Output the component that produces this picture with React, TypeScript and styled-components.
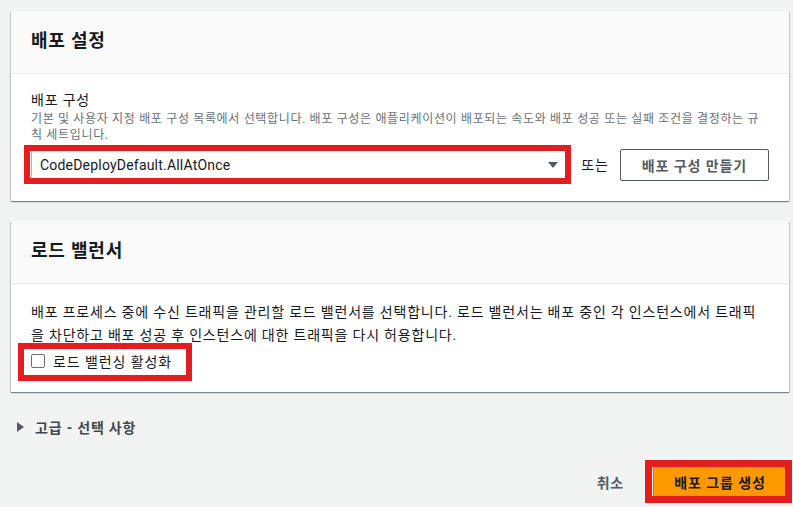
import React from "react";
import styled, { createGlobalStyle } from "styled-components";

const Global = createGlobalStyle`
  html, body {
    margin: 0;
    padding: 0;
    background: #f2f3f3;
    overflow: hidden;
  }
  body {
    font-family: Roboto, "Noto Sans CJK KR", sans-serif;
    color: #16191f;
    letter-spacing: 0.05em;
  }
  * { box-sizing: border-box; }
`;

const Page = styled.div`
  width: 793px;
  height: 507px;
  padding: 11px 4px 0 11px;
  background: #f2f3f3;
  display: flex;
  flex-direction: column;
`;

const Card = styled.section<{ $gap?: number }>`
  background: #ffffff;
  box-shadow: 0 1px 1px 0 rgba(0, 28, 36, 0.3),
    1px 1px 1px 0 rgba(0, 28, 36, 0.15),
    -1px 1px 1px 0 rgba(0, 28, 36, 0.15);
  margin-top: ${(p) => p.$gap ?? 0}px;
`;

const CardHeader = styled.div`
  background: #fafafa;
  border-bottom: 1px solid #eaeded;
  padding: 19px 20px 21px;
`;

const Title = styled.h2`
  margin: 0;
  font-size: 18px;
  line-height: 22px;
  font-weight: 700;
  color: #16191f;
`;

const CardBody = styled.div<{ $top: number }>`
  padding: ${(p) => p.$top}px 20px 20px;
`;

const Label = styled.div`
  font-size: 14px;
  line-height: 22px;
  color: #16191f;
`;

const Description = styled.div`
  font-size: 12px;
  line-height: 16px;
  letter-spacing: 0.055em;
  color: #687078;
`;

const ControlRow = styled.div`
  margin-top: 6px;
  display: flex;
  align-items: center;
`;

const Annotated = styled.div<{ $grow?: boolean }>`
  position: relative;
  display: ${(p) => (p.$grow ? "block" : "inline-flex")};
  flex: ${(p) => (p.$grow ? "1 1 auto" : "0 0 auto")};
  align-self: flex-start;
`;

const RedFrame = styled.span<{
  $t: number;
  $r: number;
  $b: number;
  $l: number;
  $w: number;
}>`
  position: absolute;
  top: ${(p) => p.$t}px;
  right: ${(p) => p.$r}px;
  bottom: ${(p) => p.$b}px;
  left: ${(p) => p.$l}px;
  border: ${(p) => p.$w}px solid #e41d1f;
  pointer-events: none;
`;

const Select = styled.div`
  height: 32px;
  border: 1px solid #aab7b8;
  border-radius: 2px;
  background: #ffffff;
  display: flex;
  align-items: center;
  justify-content: space-between;
  padding: 0 8px 0 8px;
  font-size: 14px;
  letter-spacing: 0.2px;
  color: #16191f;
`;

const Caret = styled.svg`
  width: 10px;
  height: 6px;
  flex: none;
`;

const OrText = styled.span`
  font-size: 14px;
  line-height: 22px;
  margin: 0 11px 0 14px;
  color: #16191f;
`;

const NormalButton = styled.button`
  height: 32px;
  padding: 0 21px;
  border: 1px solid #545b64;
  border-radius: 2px;
  background: #ffffff;
  color: #545b64;
  font-family: inherit;
  letter-spacing: 0.065em;
  font-size: 14px;
  font-weight: 700;
  white-space: nowrap;
`;

const Paragraph = styled.p`
  margin: 0;
  font-size: 14px;
  line-height: 23px;
  color: #16191f;
`;

const CheckRow = styled.label`
  margin-top: 3px;
  display: flex;
  align-items: center;
  gap: 8px;
  height: 22px;
  font-size: 14px;
  letter-spacing: 0.065em;
  color: #16191f;
`;

const CheckBox = styled.span`
  width: 14px;
  height: 14px;
  border: 1px solid #687078;
  border-radius: 2px;
  background: #ffffff;
  flex: none;
`;

const Expandable = styled.div`
  margin-top: 24px;
  padding-left: 6px;
  display: flex;
  align-items: center;
  gap: 11px;
  height: 22px;
  font-size: 14px;
  font-weight: 700;
  color: #414750;
`;

const Footer = styled.div`
  margin-top: 28px;
  padding-right: 2px;
  display: flex;
  justify-content: flex-end;
  align-items: center;
  gap: 29px;
`;

const LinkButton = styled.button`
  border: none;
  background: transparent;
  padding: 0;
  font-family: inherit;
  letter-spacing: inherit;
  font-size: 14px;
  font-weight: 700;
  color: #545b64;
`;

const PrimaryButton = styled.button`
  height: 32px;
  width: 134px;
  border: 1px solid #ec7211;
  border-radius: 2px;
  background: #ff9900;
  color: #16191f;
  font-family: inherit;
  letter-spacing: 0.065em;
  font-size: 14px;
  font-weight: 700;
  white-space: nowrap;
`;

export default function App() {
  return (
    <>
      <Global />
      <Page>
        <Card>
          <CardHeader>
            <Title>배포 설정</Title>
          </CardHeader>
          <CardBody $top={15}>
            <Label>배포 구성</Label>
            <Description>
              기본 및 사용자 지정 배포 구성 목록에서 선택합니다. 배포 구성은
              애플리케이션이 배포되는 속도와 배포 성공 또는 실패 조건을 결정하는
              규칙 세트입니다.
            </Description>
            <ControlRow>
              <Annotated $grow>
                <Select>
                  <span>CodeDeployDefault.AllAtOnce</span>
                  <Caret viewBox="0 0 10 6">
                    <path d="M0 0 L10 0 L5 6 Z" fill="#545b64" />
                  </Caret>
                </Select>
                <RedFrame $t={-4} $r={-4} $b={-3} $l={-7} $w={6} />
              </Annotated>
              <OrText>또는</OrText>
              <NormalButton>배포 구성 만들기</NormalButton>
            </ControlRow>
          </CardBody>
        </Card>

        <Card $gap={20}>
          <CardHeader>
            <Title>로드 밸런서</Title>
          </CardHeader>
          <CardBody $top={17}>
            <Paragraph>
              배포 프로세스 중에 수신 트래픽을 관리할 로드 밸런서를 선택합니다.
              로드 밸런서는 배포 중인 각 인스턴스에서 트래픽을 차단하고 배포 성공
              후 인스턴스에 대한 트래픽을 다시 허용합니다.
            </Paragraph>
            <Annotated>
              <CheckRow>
                <CheckBox />
                <span>로드 밸런싱 활성화</span>
              </CheckRow>
              <RedFrame $t={-4} $r={-20} $b={-9} $l={-13} $w={6} />
            </Annotated>
          </CardBody>
        </Card>

        <Expandable>
          <svg width="7" height="10" viewBox="0 0 7 10">
            <path d="M0 0 L7 5 L0 10 Z" fill="#545b64" />
          </svg>
          <span>고급 - 선택 사항</span>
        </Expandable>

        <Footer>
          <LinkButton>취소</LinkButton>
          <Annotated>
            <PrimaryButton>배포 그룹 생성</PrimaryButton>
            <RedFrame $t={-6} $r={-5} $b={-5} $l={-8} $w={7} />
          </Annotated>
        </Footer>
      </Page>
    </>
  );
}
